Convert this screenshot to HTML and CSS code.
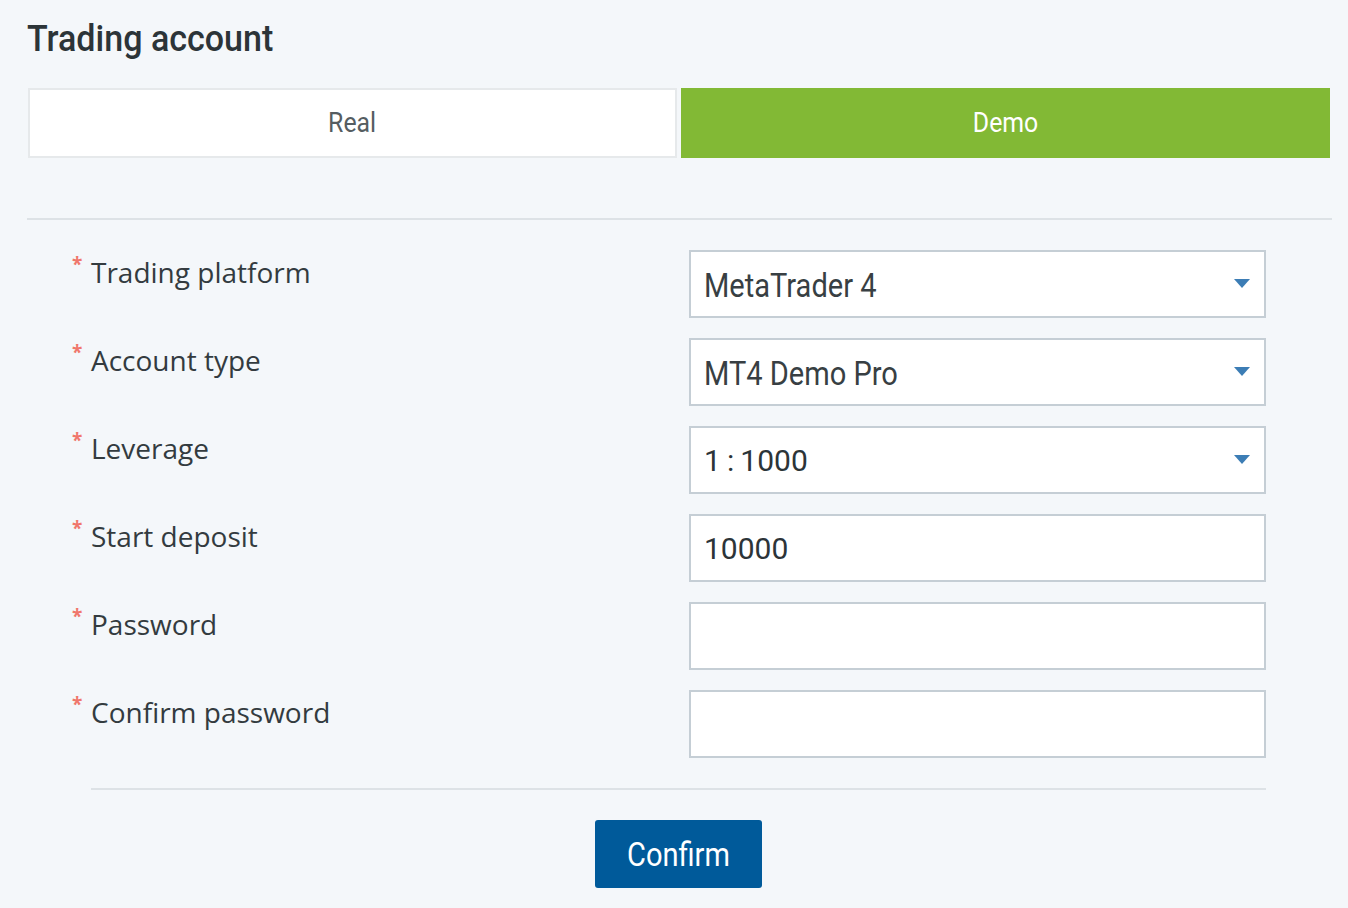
FILE: index.html
```html
<!DOCTYPE html>
<html lang="en">
<head>
<meta charset="utf-8">
<title>Trading account</title>
<link rel="stylesheet" href="styles.css">
</head>
<body>
<main class="page">
  <h1 class="title"><span class="cond">Trading account</span></h1>
  <div class="tabs">
    <button class="tab"><span class="cond cond-c">Real</span></button>
    <button class="tab tab-active"><span class="cond cond-c">Demo</span></button>
  </div>
  <hr class="divider">
  <form class="form">
    <div class="row">
      <label class="label"><span class="req">*</span>Trading platform</label>
      <div class="field select"><span class="value"><span class="cond">MetaTrader 4</span></span><svg class="arrow" viewBox="0 0 16 10" width="16" height="10"><path d="M0 0H16L8 9Z"/></svg></div>
    </div>
    <div class="row">
      <label class="label"><span class="req">*</span>Account type</label>
      <div class="field select"><span class="value"><span class="cond">MT4 Demo Pro</span></span><svg class="arrow" viewBox="0 0 16 10" width="16" height="10"><path d="M0 0H16L8 9Z"/></svg></div>
    </div>
    <div class="row">
      <label class="label"><span class="req">*</span>Leverage</label>
      <div class="field select"><span class="value num">1&#8201;:&#8201;1000</span><svg class="arrow" viewBox="0 0 16 10" width="16" height="10"><path d="M0 0H16L8 9Z"/></svg></div>
    </div>
    <div class="row">
      <label class="label"><span class="req">*</span>Start deposit</label>
      <div class="field"><span class="value num">10000</span></div>
    </div>
    <div class="row">
      <label class="label"><span class="req">*</span>Password</label>
      <div class="field"></div>
    </div>
    <div class="row">
      <label class="label"><span class="req">*</span>Confirm password</label>
      <div class="field"></div>
    </div>
    <hr class="divider form-divider">
    <div class="actions">
      <button type="button" class="confirm"><span class="cond cond-c">Confirm</span></button>
    </div>
  </form>
</main>
</body>
</html>
```

FILE: styles.css
```css
* { box-sizing: border-box; }
html, body { margin: 0; padding: 0; background: #f4f7fa; }
body { font-family: "Open Sans", "Noto Sans", sans-serif; color: #333b3f; }

.page {
  width: 1348px;
  height: 908px;
  padding: 10px 16px 0 27px;
}

/* narrow rendering of Roboto to approximate the condensed UI face */
.cond {
  display: inline-block;
  white-space: nowrap;
  transform: scaleX(0.88);
  transform-origin: left center;
}
.cond-c { transform-origin: center center; }

.title {
  margin: 0;
  font-family: "Roboto", sans-serif;
  font-weight: 500;
  font-size: 37px;
  line-height: 58px;
  color: #2c3438;
}
.title .cond { transform: scaleX(0.92); }

.tabs {
  margin-top: 20px;
  padding: 0 2px 0 1px;
  display: grid;
  grid-template-columns: 1fr 1fr;
  gap: 4px;
}

.tab {
  height: 70px;
  border: 2px solid #e6e9eb;
  background: #fff;
  font-family: "Roboto", sans-serif;
  font-size: 27px;
  color: #555d61;
  padding: 0;
}
.tab .cond { transform: scaleX(0.92); }

.tab-active {
  background: #82b935;
  border-color: #82b935;
  color: #fff;
}

.divider {
  margin: 60px 0 0;
  border: 0;
  height: 2px;
  background: #dde2e6;
}

.form {
  margin: 30px 66px 0 64px;
  display: flex;
  flex-direction: column;
  gap: 20px;
}

.row {
  display: grid;
  grid-template-columns: 1fr 577px;
  align-items: start;
}

.label {
  display: flex;
  align-items: flex-start;
  margin-left: -20px;
  padding-top: 4px;
  font-size: 28px;
  line-height: 36px;
  color: #333b3f;
}

.req {
  width: 20px;
  padding-left: 1px;
  color: #f0776c;
  font-weight: 700;
  font-size: 19px;
  line-height: 20px;
}

.field {
  height: 68px;
  border: 2px solid #c5ced5;
  background: #fff;
  display: flex;
  align-items: center;
  padding: 0 13px 0 13px;
}

.value {
  flex: 1;
  font-family: "Roboto", sans-serif;
  font-size: 33px;
  color: #383f43;
  padding-top: 2px;
}

.value.num {
  font-size: 30px;
  color: #2c3438;
  padding-top: 0;
}

.arrow {
  fill: #3c7db5;
  flex: none;
  margin-right: 1px;
}

.form-divider {
  margin: 10px 0 0;
}

.actions {
  display: flex;
  justify-content: center;
  padding-top: 10px;
}

.confirm {
  width: 167px;
  height: 68px;
  border: 0;
  border-radius: 3px;
  background: #005a9a;
  color: #fff;
  font-family: "Roboto", sans-serif;
  font-size: 33px;
  padding: 0;
}
```
